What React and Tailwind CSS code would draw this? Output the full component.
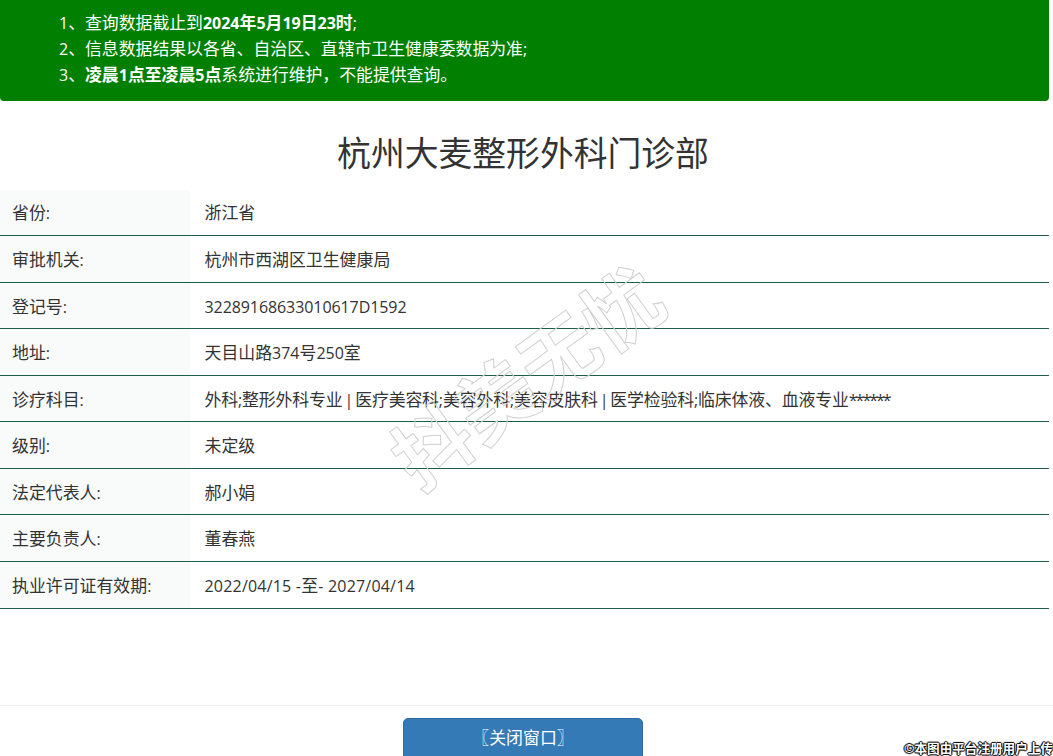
const rows = [
  ["省份:", "浙江省"],
  ["审批机关:", "杭州市西湖区卫生健康局"],
  ["登记号:", <span className="tracking-[-0.08px]"><T>32289168633010617D1592</T></span>],
  ["地址:", "天目山路374号250室"],
  [
    "诊疗科目:",
    <span className="tracking-[-0.15px]">
      外科<T>;</T>整形外科专业<span className="mx-[-2px] inline-block"><T> | </T></span>医疗美容科<T>;</T>美容外科<T>;</T>美容皮肤科
      <span className="mx-[-2px] inline-block"><T> | </T></span>医学检验科<T>;</T>临床体液、血液专业
      <span className="tracking-[-2px]"><T>******</T></span>
    </span>,
  ],
  ["级别:", "未定级"],
  ["法定代表人:", "郝小娟"],
  ["主要负责人:", "董春燕"],
  ["执业许可证有效期:", <span className="tracking-[0.2px]"><T>2022/04/15 -</T>至<T>- 2027/04/14</T></span>],
];

function T({ children }) {
  if (typeof children !== "string") return children;
  return children.split(/([\x20-\x7e]+)/).map((part, i) =>
    /^[\x20-\x7e]+$/.test(part) ? (
      <span key={i} className="whitespace-pre text-[16px]">{part}</span>
    ) : (
      part
    )
  );
}

export default function App() {
  return (
    <div
      className="relative h-screen overflow-hidden bg-white text-[16.9px] text-[#333]"
      style={{ fontFamily: '"Open Sans", "Noto Sans CJK SC", sans-serif' }}
    >
      <div className="mr-[4px]">
        <div className="h-[101px] rounded-b-[4px] bg-[#007f00] pl-[59px] pt-[10px] text-[16.85px] leading-[26px] text-white">
          <p><T>1</T>、查询数据截止到<b><T>2024</T>年<T>5</T>月<T>19</T>日<T>23</T>时</b><T>;</T></p>
          <p><T>2</T>、信息数据结果以各省、自治区、直辖市卫生健康委数据为准<T>;</T></p>
          <p><T>3</T>、<b>凌晨<T>1</T>点至凌晨<T>5</T>点</b>系统进行维护{"\uFF0C"}不能提供查询。</p>
        </div>
        <h1 className="mr-[3px] mt-[30px] h-[58.6px] text-center text-[33.8px] font-normal leading-[44px] text-[#333]">
          杭州大麦整形外科门诊部
        </h1>
        <div>
          {rows.map(([label, value]) => (
            <div key={label} className="flex h-[46.56px] border-b border-[#1e5c4c]">
              <div className="flex w-[190px] items-center bg-[#f9fafa] pl-3 pt-[1.5px]"><span><T>{label}</T></span></div>
              <div className="flex flex-1 items-center pl-[14.5px] pt-[1.5px]"><span><T>{value}</T></span></div>
            </div>
          ))}
        </div>
      </div>
      <div className="absolute inset-x-0 top-[705px] flex justify-center border-t border-[#eeeeee] pr-[7px] pt-[12px]">
        <button className="h-[50px] w-[240px] rounded-[5px] border border-[#2e6da4] bg-[#337ab7] pb-[10px] text-white">
          〖关闭窗口〗
        </button>
      </div>
      <div className="pointer-events-none absolute left-[527px] top-[377px] -translate-x-1/2 -translate-y-1/2 -rotate-[36deg] whitespace-nowrap text-[78px] font-bold leading-none text-transparent [-webkit-text-stroke:1px_#d0d0d0]">
        抖美无忧
      </div>
      <div className="absolute bottom-[-1px] right-0 text-[12.6px] font-bold leading-[16px] text-white [text-shadow:0_0_1px_#000,0_0_1px_#000,1px_0_1px_#000,-1px_0_1px_#000,0_1px_1px_#000,0_-1px_1px_#000]">
        ©本图由平台注册用户上传
      </div>
    </div>
  );
}
